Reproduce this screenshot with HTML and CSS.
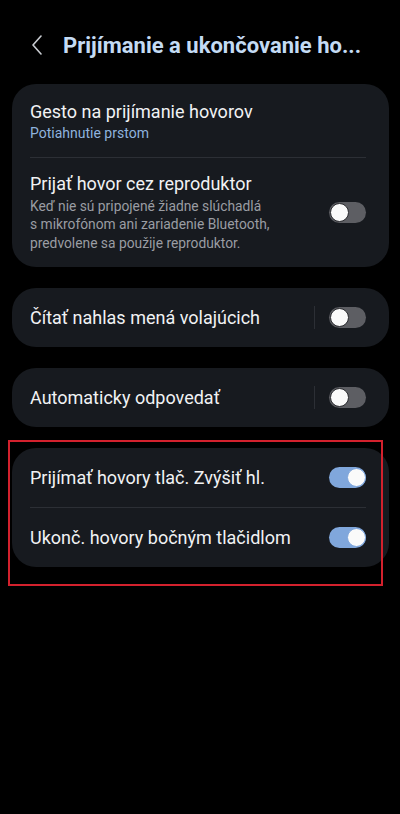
FILE: index.html
```html
<!DOCTYPE html>
<html>
<head>
    <meta charset="utf-8">
    <meta name="viewport" content="width=device-width">
    <title>Prijímanie a ukončovanie hovorov</title>
    <link rel="stylesheet" href="styles.css">
</head>
<body>
    <header class="top-bar">
        <a href="#" class="back">
            <svg width="12" height="20" viewBox="0 0 12 20">
                <path d="M10 1 L2 10 L10 19" fill="none" stroke="#c9ccd1" stroke-width="1.6" stroke-linecap="round" stroke-linejoin="round"/>
            </svg>
        </a>
        <h1>Prijímanie a ukončovanie ho...</h1>
    </header>

    <main class="settings">
        <section class="card">
            <div class="row row-tall">
                <div class="texts">
                    <div class="title">Gesto na prijímanie hovorov</div>
                    <div class="value">Potiahnutie prstom</div>
                </div>
            </div>
            <div class="divider"></div>
            <div class="row row-desc">
                <div class="texts">
                    <div class="title">Prijať hovor cez reproduktor</div>
                    <div class="desc">Keď nie sú pripojené žiadne slúchadlá<br>s mikrofónom ani zariadenie Bluetooth,<br>predvolene sa použije reproduktor.</div>
                </div>
                <span class="switch"></span>
            </div>
        </section>

        <section class="card">
            <div class="row">
                <div class="texts"><div class="title">Čítať nahlas mená volajúcich</div></div>
                <span class="sep"></span>
                <span class="switch"></span>
            </div>
        </section>

        <section class="card">
            <div class="row">
                <div class="texts"><div class="title">Automaticky odpovedať</div></div>
                <span class="sep"></span>
                <span class="switch"></span>
            </div>
        </section>

        <div class="highlight">
            <section class="card">
                <div class="row">
                    <div class="texts"><div class="title">Prijímať hovory tlač. Zvýšiť hl.</div></div>
                    <span class="switch on"></span>
                </div>
                <div class="divider"></div>
                <div class="row">
                    <div class="texts"><div class="title">Ukonč. hovory bočným tlačidlom</div></div>
                    <span class="switch on"></span>
                </div>
            </section>
            <span class="outline"></span>
        </div>
    </main>
</body>
</html>
```

FILE: styles.css
```css
html {
    background-color: #000;
}
body {
    margin: 0;
    min-height: 814px;
    background-color: #000;
    font-family: Roboto, "Noto Sans", sans-serif;
    color: #f1f2f4;
}
.top-bar {
    display: flex;
    align-items: center;
    height: 84px;
    padding: 22px 0 16px 31px;
    box-sizing: border-box;
}
.back {
    display: flex;
    width: 12px;
    height: 20px;
    margin-right: 20px;
}
.top-bar h1 {
    margin: 0;
    font-size: 22px;
    font-weight: 700;
    color: #c4dbf4;
    white-space: nowrap;
}
.settings {
    display: flex;
    flex-direction: column;
    gap: 21px;
    padding: 0 11px 0 12px;
}
.card {
    background-color: #171a1f;
    border-radius: 24px;
    padding: 0 23px 0 18px;
}
.row {
    display: flex;
    align-items: center;
    height: 59px;
}
.row-tall {
    height: 73px;
}
.row-desc {
    height: 109px;
}
.texts {
    flex: 1;
}
.title {
    font-size: 18px;
    line-height: 22px;
}
.value {
    margin-top: 2px;
    font-size: 14px;
    color: #8fb3de;
}
.desc {
    margin-top: 2px;
    font-size: 13.8px;
    line-height: 18.5px;
    color: #9a9da3;
}
.divider {
    height: 1px;
    background-color: #2c2f35;
}
.sep {
    width: 1px;
    height: 23px;
    margin-right: 14px;
    background-color: #2c2f35;
}
.switch {
    position: relative;
    width: 37px;
    height: 21px;
    border-radius: 11px;
    background-color: #5d5e63;
}
.switch::after {
    content: "";
    position: absolute;
    top: 0.5px;
    left: 0.5px;
    width: 17px;
    height: 17px;
    border-radius: 50%;
    background-color: #fafafa;
    border: 1.5px solid #2a2b2f;
}
.switch.on {
    background-color: #80a7dc;
}
.switch.on::after {
    left: auto;
    right: 0.5px;
    border-color: #80a7dc;
}
.highlight {
    position: relative;
}
.outline {
    position: absolute;
    top: -8px;
    left: -4px;
    width: 375px;
    height: 146px;
    border: 2px solid #d3212d;
    box-sizing: border-box;
}
```
